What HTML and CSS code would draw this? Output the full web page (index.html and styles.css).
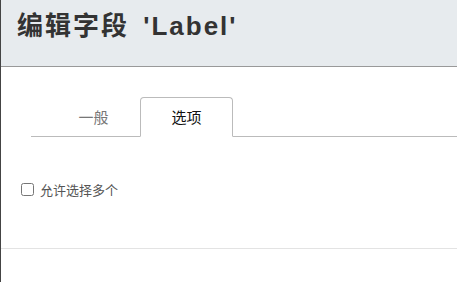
FILE: index.html
```html
<!DOCTYPE html>
<html lang="zh-CN">
<head>
    <meta charset="UTF-8">
    <meta name="viewport" content="width=device-width, initial-scale=1.0">
    <title>编辑字段</title>
    <link rel="stylesheet" href="styles.css">
</head>
<body>
    <div class="dlg">
        <!-- 헤더 -->
        <div class="dlg-head">
            <h1>编辑字段 'Label'</h1>
        </div>

        <!-- 탭 -->
        <div class="dlg-body">
            <ul class="tabs">
                <li><a href="#">一般</a></li>
                <li class="on"><a href="#">选项</a></li>
            </ul>

            <label class="chk">
                <input type="checkbox">
                <span>允许选择多个</span>
            </label>
        </div>

        <div class="dlg-foot"></div>
    </div>
</body>
</html>
```

FILE: styles.css
```css
html,body{
    margin: 0;
    padding: 0;
    height: 100%;
}
body{
    background-color: #fff;
    font-family: "Liberation Sans", "Noto Sans CJK SC", sans-serif;
}

/* 다이얼로그 박스 */
.dlg{
    height: 100%;
    border-left: 1px solid #444;
    box-sizing: border-box;
}

/* 헤더 */
.dlg-head{
    height: 66px;
    padding: 0 16px;
    background-color: #e7ebee;
    border-bottom: 1px solid #999;
}
.dlg-head h1{
    margin: 0;
    padding-top: 10px;
    font-size: 26px;
    font-weight: bold;
    line-height: 32px;
    letter-spacing: 2px;
    word-spacing: 5px;
    color: #333;
}

/* 탭메뉴 */
.tabs{
    display: flex;
    margin: 30px 0 0 30px;
    padding: 0 0 0 16px;
    list-style: none;
    border-bottom: 1px solid #bbb;
}
.tabs li{
    margin-bottom: -1px;
}
.tabs a{
    display: block;
    width: 93px;
    height: 38px;
    line-height: 40px;
    text-align: center;
    font-size: 15px;
    color: #777;
    text-decoration: none;
    border: 1px solid transparent;
    border-bottom: none;
    border-radius: 4px 4px 0 0;
    box-sizing: border-box;
}
.tabs .on a{
    height: 40px;
    color: #111;
    background-color: #fff;
    border-color: #bbb;
    border-bottom: 1px solid #fff;
}

/* 체크박스 */
.chk{
    display: flex;
    align-items: center;
    gap: 6px;
    margin: 43px 0 0 20px;
    font-size: 13px;
    color: #555;
}
.chk input{
    width: 13px;
    height: 13px;
    margin: 0;
}

/* 하단 */
.dlg-foot{
    margin-top: 49px;
    border-top: 1px solid #e3e3e3;
}
```
